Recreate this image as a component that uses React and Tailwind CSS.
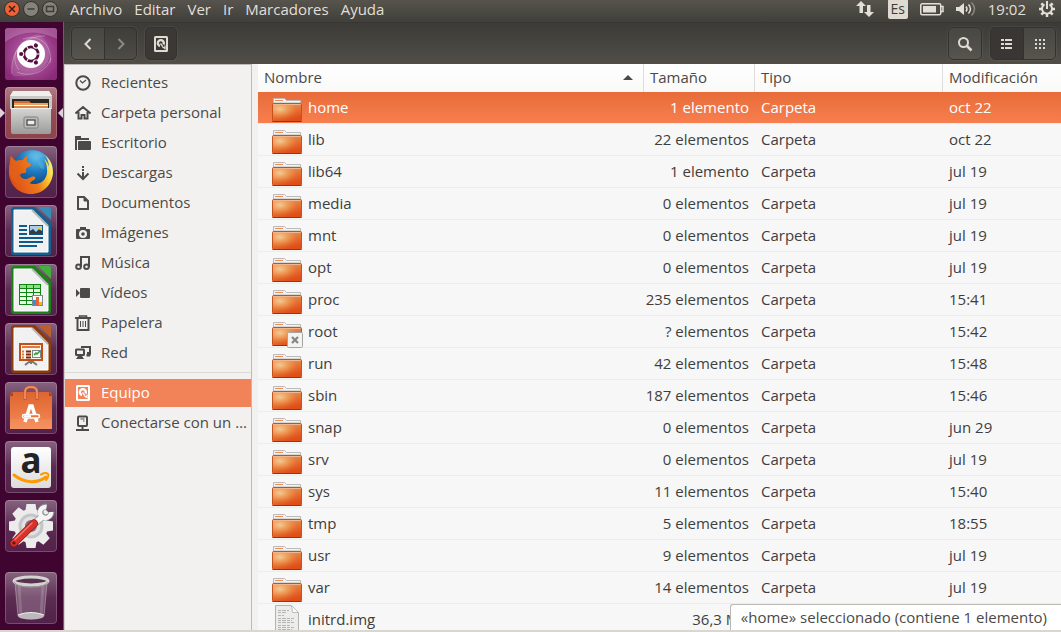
import React from "react";

/* ---------- launcher artwork (each drawn on a 52x52 tile) ---------- */

function DashArt() {
  const ringDots = [180, 60, -60];
  return (
    <svg viewBox="0 0 52 52" className="size-full">
      <defs>
        <radialGradient id="dashGlow" cx="50%" cy="50%" r="60%">
          <stop offset="0" stopColor="#c66fb4" />
          <stop offset="0.6" stopColor="#a04690" />
          <stop offset="1" stopColor="#8b2a78" />
        </radialGradient>
      </defs>
      <rect width="52" height="52" rx="3" fill="url(#dashGlow)" />
      <path d="M8 48C4 26 16 8 34 6c8 6 12 14 10 24C42 42 26 50 8 48z" fill="#fff" opacity="0.12" />
      <path d="M7 46C5 24 18 8 40 8M18 11c18-6 30 8 27 24M46 30c-4 14-20 20-34 14M14 42C6 32 10 18 22 13" fill="none" stroke="#fff" strokeOpacity="0.28" />
      <path d="M0 3a3 3 0 013-3h46a3 3 0 013 3v8C34 2 18 2 0 14z" fill="#fff" opacity="0.2" />
      <circle cx="26" cy="26" r="14" fill="#fff" />
      <circle cx="26" cy="26" r="7.2" fill="none" stroke="#55103f" strokeWidth="2.8" />
      {ringDots.map((a) => (
        <g key={a} transform={`rotate(${a} 26 26)`}>
          <circle cx="35.6" cy="26" r="2.9" fill="#fff" />
          <circle cx="35.8" cy="26" r="2.1" fill="#55103f" />
          <path d="M17 26h3.5" stroke="#fff" strokeWidth="1" />
        </g>
      ))}
    </svg>
  );
}

function FilesArt() {
  return (
    <svg viewBox="0 0 52 52" className="size-full">
      <defs>
        <linearGradient id="drawer" x1="0" x2="0" y1="0" y2="1">
          <stop offset="0" stopColor="#d6d6d4" />
          <stop offset="1" stopColor="#9c9c9a" />
        </linearGradient>
      </defs>
      <path d="M8 4h36l3 5v13H5V9z" fill="#c9c9c7" />
      <path d="M8 4h36l3 5H5z" fill="#efefee" />
      <rect x="7" y="12" width="37" height="10" fill="#2d2522" />
      <path d="M9 14h15l2 2h17v6H9z" fill="#cf6a32" />
      <path d="M9 16h34v2H9z" fill="#e8a062" />
      <path d="M9 18h34v1.2H9z" fill="#fff" />
      <path d="M9 19.2h34V22H9z" fill="#d9873f" />
      <path d="M6 21h40v24q0 2-2 2H8q-2 0-2-2z" fill="url(#drawer)" />
      <path d="M6 21.5h40" stroke="#efefed" />
      <rect x="19" y="30" width="14" height="11" rx="1.5" fill="#bdbdbb" stroke="#7e7e7c" />
      <rect x="22" y="33" width="8" height="5" fill="#eee" stroke="#4d4d4b" strokeWidth="1.3" />
    </svg>
  );
}

function FirefoxArt() {
  return (
    <svg viewBox="0 0 52 52" className="size-full">
      <defs>
        <radialGradient id="globe" cx="60%" cy="15%" r="85%">
          <stop offset="0" stopColor="#63c3ef" />
          <stop offset="0.45" stopColor="#1c78bd" />
          <stop offset="1" stopColor="#072e66" />
        </radialGradient>
        <linearGradient id="foxTail" x1="0" x2="1" y1="0.6" y2="0.3">
          <stop offset="0" stopColor="#dd4a16" />
          <stop offset="0.55" stopColor="#ee7a1b" />
          <stop offset="0.82" stopColor="#fbc935" />
          <stop offset="1" stopColor="#fff07a" />
        </linearGradient>
      </defs>
      <circle cx="27" cy="25" r="21" fill="url(#globe)" />
      <path d="M25 7c6-2 13 0 16 4-4-1-6 1-9 2-4 1-6-2-9-2zM33 16c4-1 7 3 6 7-3 0-6-3-6-7z" fill="#5bb5df" opacity="0.45" />
      <path d="M6 10c1 1 3 4 5 5 2-1 5-1 7-1 1-2 3-4 5-4-1 2-2 4-1 6 2 1 4 1 4 3-1 2-4 2-5 4 0 1 1 3-1 4-2 0-4 0-5 2 1 4 6 5 9 3 2-1 4-2 6-1 1 2-1 3-3 4-4 3-1 3 4 3 8-1 12-8 11-15 0-4-1-7-3-10 3 2 4 5 5 8 0-5-2-9-4-12 6 5 8 11 8 18-1 12-10 21-22 21C13 48 4 38 4 26c0-3 0-5 1-8 0-3 0-5 1-8z" fill="url(#foxTail)" />
      <path d="M6 10c1 1 3 4 5 5 2-1 5-1 7-1-4 3-6 7-4 11-3 3-4 9 2 14C8 36 4 31 4 25c0-6 1-10 2-15z" fill="#e2641c" opacity="0.65" />
    </svg>
  );
}

function OfficePage({ dark, light, children }) {
  return (
    <svg viewBox="0 0 52 52" className="size-full">
      <path d="M8 2h22l16 16v29q0 3-3 3H9q-3 0-3-3V4z" fill={dark} />
      <path d="M33 2h11q2 0 2 2v11z" fill={light} />
      <path d="M9 5h18l16 16v26H9z" fill="#f1f1f1" stroke="#fff" />
      <path d="M27 5l16 16" stroke="#b9b9b9" strokeWidth="2" />
      {children}
    </svg>
  );
}

function WriterArt() {
  return (
    <OfficePage dark="#16608f" light="#378cb8">
      <path d="M14 21h8M14 25h8M14 29h8M14 33h24M14 37h24M14 41h18" stroke="#0f5c8c" strokeWidth="2" />
      <rect x="24" y="20" width="14" height="10" fill="#0d5a89" />
      <rect x="25" y="21" width="12" height="8" fill="#a6d1ee" />
      <path d="M25 29v-3l3-2 3 3 3-3 3 2v3z" fill="#363d40" />
      <circle cx="34.5" cy="23" r="1.5" fill="#f8c83a" />
    </OfficePage>
  );
}

function CalcArt() {
  return (
    <OfficePage dark="#198317" light="#42b13b">
      <rect x="14" y="20" width="22" height="21" fill="#0f8412" />
      {[21, 25, 29, 33, 37].map((y, i) =>
        [15, 22, 29].map((x) => (
          <rect key={`${x}-${y}`} x={x} y={y} width="6" height="3" fill={i === 0 ? "#8ee085" : "#e9fbe6"} />
        ))
      )}
      <rect x="27.5" y="31.5" width="10" height="10" fill="#f5f7f8" stroke="#7c868c" />
      <rect x="28" y="36" width="3" height="5" fill="#2f8fe0" />
      <rect x="31" y="33" width="3" height="8" fill="#e8662d" />
      <rect x="34" y="38" width="3" height="3" fill="#f3b61f" />
    </OfficePage>
  );
}

function ImpressArt() {
  return (
    <OfficePage dark="#8c3b0c" light="#bb602c">
      <rect x="15" y="21" width="22" height="16" fill="#fdf3ec" stroke="#c14f18" strokeWidth="2" />
      <rect x="17" y="23" width="18" height="2" fill="#e07a42" />
      <path d="M17 28.5h2m-2 3h2m-2 3h2" stroke="#e07a42" strokeWidth="2" />
      <path d="M21 28.5h5m-5 3h5m-5 3h5" stroke="#7b2d06" strokeWidth="2" />
      <rect x="27.5" y="27.5" width="8" height="7" fill="#f4f4f4" stroke="#7b8580" />
      <path d="M29 32l2-2 1 1 3-3" fill="none" stroke="#25a02b" strokeWidth="1.5" />
      <path d="M26 38v3m-6 1l4-3h4l4 3" fill="none" stroke="#777" strokeWidth="2" />
    </OfficePage>
  );
}

function StoreArt() {
  return (
    <svg viewBox="0 0 52 52" className="size-full">
      <defs>
        <linearGradient id="bag" x1="0" x2="0" y1="0" y2="1">
          <stop offset="0" stopColor="#dd6530" />
          <stop offset="1" stopColor="#f58a55" />
        </linearGradient>
      </defs>
      <path d="M7 10h38l2 4v33H5V14z" fill="url(#bag)" />
      <path d="M5 14l3-4v4zM47 14l-3-4v4z" fill="#a84318" />
      <path d="M20 18v-8q0-5 6-5t6 5v8" fill="none" stroke="#c8572b" strokeWidth="3" />
      <path d="M20 17v-7q0-5 6-5t6 5v7" fill="none" stroke="#ef9b74" strokeWidth="1.5" />
      <path d="M5 37h42v10H5z" fill="#fff" opacity="0.07" />
      <path d="M20 40l5-16h2l5 16" fill="none" stroke="#fff" strokeWidth="3.5" />
      <rect x="17.5" y="32.5" width="17" height="3.5" rx="1.7" fill="#e87543" stroke="#fff" strokeWidth="1.5" />
      <path d="M19 34.2h7" stroke="#fff" strokeWidth="2" />
    </svg>
  );
}

function AmazonArt() {
  return (
    <svg viewBox="0 0 52 52" className="size-full overflow-visible">
      <defs>
        <linearGradient id="plate" x1="0" x2="0" y1="0" y2="1">
          <stop offset="0" stopColor="#fff" />
          <stop offset="1" stopColor="#dcdcdc" />
        </linearGradient>
      </defs>
      <rect x="6" y="6" width="40" height="41" rx="3" fill="url(#plate)" />
      <text x="26" y="32" textAnchor="middle" fontFamily="Noto Sans" fontWeight="700" fontSize="35" fill="#232323">a</text>
      <path d="M9 34c10 8 23 9 32 2" fill="none" stroke="#f90" strokeWidth="3" strokeLinecap="round" />
      <path d="M36 33.500c3-1.500 6-1.500 7-.5s0 4-2 6" fill="none" stroke="#f90" strokeWidth="2" strokeLinecap="round" />
    </svg>
  );
}

function SettingsArt() {
  const teeth = [0, 45, 90, 135, 180, 225, 270, 315];
  return (
    <svg viewBox="0 0 52 52" className="size-full">
      {teeth.map((a) => (
        <path key={a} d="M21.5 4h9l1.500 9H20z" fill="#ececec" transform={`rotate(${a} 26 26)`} />
      ))}
      <circle cx="26" cy="26" r="17" fill="#ececec" />
      <circle cx="26" cy="26" r="11" fill="#e2e0e1" stroke="#c6c6c6" strokeWidth="3" />
      <circle cx="26" cy="26" r="6" fill="#8a6a82" />
      <path d="M30 23l7-6" stroke="#8c8c8c" strokeWidth="7.5" />
      <path d="M41.500 6.500A5.500 5.500 0 1 0 46.500 12" fill="none" stroke="#8c8c8c" strokeWidth="6" />
      <path d="M41.500 7A5.500 5.500 0 1 0 46 12" fill="none" stroke="#f4f4f4" strokeWidth="4.500" />
      <path d="M30 23l7-6" stroke="#f4f4f4" strokeWidth="6" />
      <path d="M9 43L29 23.500" stroke="#9e1610" strokeWidth="8" strokeLinecap="round" />
      <path d="M9 43L29 23.500" stroke="#d9322a" strokeWidth="6.500" strokeLinecap="round" />
      <path d="M10 39.500L27 23" stroke="#ef7a70" strokeWidth="1.500" strokeLinecap="round" />
      <circle cx="9" cy="43" r="1.600" fill="#5f1310" />
    </svg>
  );
}

function TrashArt() {
  return (
    <svg viewBox="0 0 52 52" className="size-full">
      <path d="M10 11l3 33q13 7 26 0l3-33z" fill="#fff" opacity="0.2" />
      <path d="M14 13l2 31M38 13l-2 31" stroke="#fff" strokeOpacity="0.15" strokeWidth="3" />
      <path d="M10 11l3 33M42 11l-3 33" stroke="#cbbcc8" strokeOpacity="0.5" />
      <ellipse cx="26" cy="44" rx="13" ry="3.500" fill="#bcb8bc" />
      <path d="M13 43q13-5 26 0" fill="none" stroke="#eee" />
      <ellipse cx="26" cy="9" rx="17" ry="4" fill="#583350" stroke="#d5d3d2" strokeWidth="3" />
      <path d="M9 10q3 5 17 5t17-5" fill="none" stroke="#9e9a9b" />
    </svg>
  );
}

const launcherItems = [
  { name: "Buscar en el equipo", Art: DashArt, tile: "bg-[#8b2a78]" },
  { name: "Archivos", Art: FilesArt, tile: "bg-[#8d434e]", active: true },
  { name: "Firefox", Art: FirefoxArt },
  { name: "LibreOffice Writer", Art: WriterArt },
  { name: "LibreOffice Calc", Art: CalcArt },
  { name: "LibreOffice Impress", Art: ImpressArt },
  { name: "Software de Ubuntu", Art: StoreArt },
  { name: "Amazon", Art: AmazonArt },
  { name: "Configuración del sistema", Art: SettingsArt },
];

function LauncherTile({ name, Art, tile = "bg-[#532149]", active }) {
  return (
    <button
      type="button"
      aria-label={name}
      className={`relative size-[52px] shrink-0 rounded-[4px] bg-linear-to-b from-white/30 via-white/5 to-white/0 shadow-[inset_0_0_0_1px_rgba(255,255,255,0.2)] ${tile}`}
    >
      <Art />
      {active && (
        <>
          <span className="absolute top-[21px] -left-[5px] border-y-[5px] border-l-[5px] border-y-transparent border-l-[#dcd4da]" />
          <span className="absolute top-[21px] -right-[6px] border-y-[5px] border-r-[5px] border-y-transparent border-r-[#dcd4da]" />
        </>
      )}
    </button>
  );
}

/* ---------- 16x16 symbolic icons ---------- */

function Sym({ children, size = "size-4" }) {
  return (
    <svg viewBox="0 0 16 16" className={`${size} shrink-0`} fill="none" stroke="currentColor" strokeWidth="2" aria-hidden="true">
      {children}
    </svg>
  );
}

const DiskIcon = () => (
  <Sym>
    <rect x="2" y="1" width="12" height="14" rx="0.5" />
    <path d="M10.500 8.500A3 3 0 10 7 10" strokeWidth="2.400" />
    <path d="M7.500 7.500L9.500 10M9 10.500l3 2V9.500" strokeWidth="1.300" />
  </Sym>
);

const places = [
  { label: "Recientes", icon: <Sym><circle cx="8" cy="8" r="6.700" /><path d="M5 5.500l2.500 2.500L11 5" strokeWidth="1.200" /></Sym> },
  { label: "Carpeta personal", icon: <Sym><path d="M.500 8.500L8 2l7.500 6.500M3.500 7v6.500h3V10h3v3.500h3V7" /></Sym> },
  { label: "Escritorio", icon: <Sym><path d="M0 1h6v2h8v2H2v10H0z" fill="currentColor" stroke="none" /><path d="M4 6h11q1 0 1 1v7q0 1-1 1H3V7q0-1 1-1z" fill="currentColor" stroke="none" /></Sym> },
  { label: "Descargas", icon: <Sym><path d="M8 1v2M8 4v2M8 7v2" /><path d="M8 9v4M2.500 8.500L8 14l5.500-5.500" /></Sym> },
  { label: "Documentos", icon: <Sym><path d="M3 2h6l4 4v8H3z" /><path d="M9 2v4h4z" fill="currentColor" strokeWidth="1" /></Sym> },
  { label: "Imágenes", icon: <Sym><path fillRule="evenodd" d="M5 2h6v2h3q1 0 1 1v8q0 1-1 1H2q-1 0-1-1V5q0-1 1-1h3zM8 5a4 4 0 100 8 4 4 0 000-8zm0 2.200a1.800 1.800 0 110 3.600 1.800 1.800 0 010-3.600z" fill="currentColor" stroke="none" /></Sym> },
  { label: "Música", icon: <Sym><path d="M6 12V2h8v10" /><circle cx="3.500" cy="11.800" r="2.300" /><circle cx="11.500" cy="11.800" r="2.300" /></Sym> },
  { label: "Vídeos", icon: <Sym><path d="M1 4l4 4-4 4zM6 3h8q1 0 1 1v8q0 1-1 1H6q-1 0-1-1V4q0-1 1-1z" fill="currentColor" stroke="none" /></Sym> },
  { label: "Papelera", icon: <Sym><path d="M0 3h16M2.500 4v11h11V4" /><path d="M4.500 3V1h7v2" strokeWidth="1.500" /><path d="M5.500 6v6M8 6v6M10.500 6v6" strokeWidth="1" /></Sym> },
  { label: "Red", icon: <Sym><rect x="1" y="4.500" width="8" height="5.500" rx="0.500" /><path d="M3 11h4l2 3H1zM11.500 9H16l-1 2.500h-3.500z" fill="currentColor" stroke="none" /><path d="M7 3V2h8v6h-3" /></Sym> },
];

const devices = [
  { label: "Equipo", icon: <DiskIcon />, selected: true },
  { label: "Conectarse con un …", icon: <Sym><rect x="3" y="1.500" width="9" height="9.500" rx="1" /><path d="M5.500 4h4M8 6h1.500" strokeWidth="1.200" /><path d="M7.500 11v4M1 15h13" /></Sym> },
];

function PlaceList({ items }) {
  return (
    <ul>
      {items.map(({ label, icon, selected }) => (
        <li key={label} className="py-px">
          <a
            href="#"
            aria-current={selected ? "page" : undefined}
            className={`flex h-7 items-center gap-2.5 pr-1 pl-2.5 whitespace-nowrap ${selected ? "bg-[#f28359] text-white" : "text-[#4b4a48]"}`}
          >
            {icon}
            <span className="pb-0.5">{label}</span>
          </a>
        </li>
      ))}
    </ul>
  );
}

/* ---------- file list ---------- */

const files = [
  ["home", "1 elemento", "oct 22"],
  ["lib", "22 elementos", "oct 22"],
  ["lib64", "1 elemento", "jul 19"],
  ["media", "0 elementos", "jul 19"],
  ["mnt", "0 elementos", "jul 19"],
  ["opt", "0 elementos", "jul 19"],
  ["proc", "235 elementos", "15:41"],
  ["root", "? elementos", "15:42"],
  ["run", "42 elementos", "15:48"],
  ["sbin", "187 elementos", "15:46"],
  ["snap", "0 elementos", "jun 29"],
  ["srv", "0 elementos", "jul 19"],
  ["sys", "11 elementos", "15:40"],
  ["tmp", "5 elementos", "18:55"],
  ["usr", "9 elementos", "jul 19"],
  ["var", "14 elementos", "jul 19"],
  ["initrd.img", "36,3 MB", ""],
];

function FolderIcon({ locked }) {
  return (
    <svg viewBox="0 0 32 28" className="h-7 w-8 shrink-0" aria-hidden="true">
      <defs>
        <linearGradient id="folderBody" x1="0" x2="0.5" y1="0" y2="1">
          <stop offset="0" stopColor="#eca066" />
          <stop offset="0.5" stopColor="#e67d3c" />
          <stop offset="1" stopColor="#e04e18" />
        </linearGradient>
        <radialGradient id="folderShine" cx="25%" cy="30%" r="60%">
          <stop offset="0" stopColor="#f7d29c" stopOpacity="0.9" />
          <stop offset="1" stopColor="#f0a050" stopOpacity="0" />
        </radialGradient>
      </defs>
      <path d="M1.500 7V2.500h11l2 2h14V7z" fill="#f5f4f2" stroke="#bdbab6" />
      <path d="M3 4.500h8" stroke="#ee8a5b" />
      <rect x="0.500" y="7.500" width="29" height="18" rx="1" fill="url(#folderBody)" stroke="#c9501f" />
      <rect x="1" y="8" width="28" height="17" fill="url(#folderShine)" />
      <path d="M1.500 8.500h27" stroke="#f4b68c" />
      <path d="M0.500 25.500h29" stroke="#a52c0c" />
      {locked && (
        <g>
          <rect x="15.500" y="12.500" width="15" height="15" rx="1" fill="#f3f3f2" stroke="#a5a5a3" />
          <path d="M20 17l6 6M26 17l-6 6" stroke="#858583" strokeWidth="2.200" />
        </g>
      )}
    </svg>
  );
}

function DocumentIcon() {
  return (
    <svg viewBox="0 0 32 32" className="h-8 w-8 shrink-0" aria-hidden="true">
      <path d="M3.500 1.500h16l7 7v27h-23z" fill="#ececeb" stroke="#b3b3b1" />
      <path d="M19.500 1.500l1 7h6z" fill="#fff" stroke="#bdbdbb" />
      <path d="M6 6.500h11M6 8.500h9M6 11.500h6M6 14.500h16M6 16.500h14M6 18.500h16M6 21.500h13M6 23.500h16M6 25.500h14M6 28.500h16M6 30.500h16" stroke="#b5b5b3" strokeDasharray="3 1 4 1" />
    </svg>
  );
}

function FileTable() {
  return (
    <table className="w-full table-fixed border-separate border-spacing-0 text-left text-[#3f3e3c]">
      <colgroup>
        <col />
        <col className="w-[111px]" />
        <col className="w-[188px]" />
        <col className="w-[119px]" />
      </colgroup>
      <thead>
        <tr className="h-7 bg-linear-to-b from-white to-[#f9f9f8] text-[#4a4947] [&>th]:pt-0 [&>th]:pr-2.5 [&>th]:pb-0.5 [&>th]:pl-1.5 [&>th]:font-normal">
          <th scope="col" aria-sort="ascending">
            <div className="flex items-center justify-between">
              Nombre
              <span className="border-x-[5px] border-b-[5px] border-x-transparent border-b-[#4a4947]" />
            </div>
          </th>
          <th scope="col" className="border-l border-[#dedddb]">Tamaño</th>
          <th scope="col" className="border-l border-[#dedddb]">Tipo</th>
          <th scope="col" className="border-l border-[#dedddb]">Modificación</th>
        </tr>
      </thead>
      <tbody>
        {files.map(([name, size, date], i) => {
          const isFile = name === "initrd.img";
          const look =
            i === 0
              ? "bg-linear-to-b from-[#e76c39] to-[#f87f4f] text-white"
              : "bg-[#f7f7f7]";
          return (
            <tr key={name} aria-selected={i === 0} className={`h-8 shadow-[inset_0_-1px_0_#ededec] [&>td]:p-0 ${look}`}>
              <td>
                <div className="flex h-8 items-center gap-1 pl-3.5">
                  {isFile ? <DocumentIcon /> : <div className="flex h-8 items-end"><FolderIcon locked={name === "root"} /></div>}
                  <span className="pb-0.5">{name}</span>
                </div>
              </td>
              <td><div className="pr-[5px] pb-0.5 text-right whitespace-nowrap">{size}</div></td>
              <td><div className="pb-0.5 pl-[7px]">{isFile ? "" : "Carpeta"}</div></td>
              <td><div className="pb-0.5 pl-[7px]">{date}</div></td>
            </tr>
          );
        })}
      </tbody>
    </table>
  );
}

/* ---------- top bar and toolbar ---------- */

function TopBar() {
  const round = "flex size-4 items-center justify-center rounded-full border border-[#33312c]";
  return (
    <header className="flex h-[22px] shrink-0 items-center bg-linear-to-b from-[#56544c] to-[#403f3a] pb-1 text-[#e3dfd7]">
      <div className="flex gap-[3px] pl-1">
        <button type="button" aria-label="Cerrar" className={`${round} bg-[#ee6238] text-[#3b1f14]`}>
          <svg viewBox="0 0 16 16" className="size-4 shrink-0" stroke="currentColor" strokeWidth="1.5"><path d="M5 5l6 6m0-6l-6 6" /></svg>
        </button>
        <button type="button" aria-label="Minimizar" className={`${round} bg-[#84827a] text-[#3c3b37]`}>
          <svg viewBox="0 0 16 16" className="size-4 shrink-0" stroke="currentColor" strokeWidth="1.500"><path d="M4.500 8h7" /></svg>
        </button>
        <button type="button" aria-label="Restaurar" className={`${round} bg-[#84827a] text-[#3c3b37]`}>
          <svg viewBox="0 0 16 16" className="size-4 shrink-0" fill="none" stroke="currentColor" strokeWidth="1.500"><rect x="4.500" y="5.500" width="7" height="5" /></svg>
        </button>
      </div>
      <nav className="flex gap-3 pl-3">
        {["Archivo", "Editar", "Ver", "Ir", "Marcadores", "Ayuda"].map((m) => (
          <button key={m} type="button">{m}</button>
        ))}
      </nav>
      <div className="ml-auto flex items-center pr-[5px]">
        <svg viewBox="0 0 18 18" className="mr-3.5 size-[18px]" fill="currentColor" role="img" aria-label="Red">
          <path d="M0 6l5-5 5 5H7v7H3.500V6zM8 12h3V5h3.500v7H18l-5 5z" />
        </svg>
        <span className="mr-3 flex h-5 w-5 items-center justify-center rounded-[2px] bg-[#dfdbd2] text-sm text-[#3c3b37]">Es</span>
        <svg viewBox="0 0 24 14" className="mr-3 h-3.5 w-6" fill="none" stroke="currentColor" role="img" aria-label="Batería">
          <rect x="0.750" y="1.750" width="20" height="11" rx="1.500" strokeWidth="1.500" />
          <rect x="3" y="4" width="13" height="6.500" fill="currentColor" stroke="none" />
          <path d="M21 4.500h2v5h-2" strokeWidth="1.500" />
        </svg>
        <svg viewBox="0 0 20 16" className="mr-3 h-4 w-5" fill="none" stroke="currentColor" strokeWidth="1.500" role="img" aria-label="Sonido">
          <path d="M0 6h3l5-4v12l-5-4H0z" fill="currentColor" stroke="none" />
          <path d="M10 5.500q2 2.500 0 5M12.500 3.500q4 4.500 0 9" />
          <path d="M15.500 1.500q6 6.500 0 13" opacity="0.4" />
        </svg>
        <time className="mr-3">19:02</time>
        <svg viewBox="0 0 18 18" className="size-[18px]" fill="none" stroke="currentColor" role="img" aria-label="Sistema">
          <path d="M6.500 4.400a5 5 0 105 0" strokeWidth="2" />
          <path d="M9 1v8" strokeWidth="2" />
          <path d="M14 9h3M1 9h3M9 14v3M12.500 12.500l2.200 2.200M5.500 12.500l-2.200 2.200M13 5l1.700-1.700M5 5L3.300 3.300" strokeWidth="2.500" />
        </svg>
      </div>
    </header>
  );
}

function Toolbar() {
  const group = "flex h-[33px] overflow-hidden rounded-[5px] border border-[#33322e] shadow-[0_0_0_1px_rgba(255,255,255,0.05)]";
  const btn = "flex w-8 items-center justify-center";
  return (
    <div className="flex h-[42px] shrink-0 items-center border-t border-[#383733] bg-linear-to-b from-[#3c3b37] to-[#504e47] pr-[5px] pl-[7px] text-[#dfdbd2]">
      <div className={group}>
        <button type="button" aria-label="Atrás" className={`${btn} bg-white/5`}>
          <Sym><path d="M10.500 3L5.500 8l5 5" /></Sym>
        </button>
        <button type="button" aria-label="Adelante" className={`${btn} border-l border-[#33322e] text-[#8d8a83]`}>
          <Sym><path d="M5.500 3l5 5-5 5" /></Sym>
        </button>
      </div>
      <div className={`${group} ml-2 bg-[#3a3935]`}>
        <button type="button" aria-label="Equipo" className="flex w-[30px] items-center justify-center"><DiskIcon /></button>
      </div>
      <div className={`${group} ml-auto bg-white/5`}>
        <button type="button" aria-label="Buscar" className={btn}>
          <Sym><circle cx="6.500" cy="6.500" r="4.500" /><path d="M9.500 9.500l5 5" strokeWidth="2.600" /></Sym>
        </button>
      </div>
      <div className={`${group} ml-2`}>
        <button type="button" aria-label="Vista de lista" className={`${btn} bg-[#383733]`}>
          <Sym><path d="M2 4h3M6 4h7M2 8h3M6 8h7M2 12h3M6 12h7" /></Sym>
        </button>
        <button type="button" aria-label="Vista de iconos" className={`${btn} border-l border-[#33322e] bg-white/5`}>
          <Sym><path d="M3 4h10M3 8h10M3 12h10" strokeDasharray="2 2" /></Sym>
        </button>
      </div>
    </div>
  );
}

export default function App() {
  return (
    <div className="flex h-screen flex-col overflow-hidden border-b-2 border-[#dad6d0] bg-[#f2f1f0] font-['Open_Sans','Noto_Sans',sans-serif] text-[15px] leading-5">
      <TopBar />
      <div className="flex min-h-0 flex-1">
        <aside className="flex w-16 shrink-0 flex-col gap-[7px] border-r border-[#7d5375] bg-[#400430] pt-1.5 pb-1.5 pl-[5px]">
          {launcherItems.map((item) => (
            <LauncherTile key={item.name} {...item} />
          ))}
          <div className="mt-auto flex">
            <LauncherTile name="Papelera" Art={TrashArt} />
          </div>
        </aside>
        <div className="flex min-w-0 flex-1 flex-col">
          <Toolbar />
          <div className="flex min-h-0 flex-1">
            <nav className="w-[188px] shrink-0 border-t border-r border-l border-[#bebbb7] border-l-[#d5d2ce] pt-[3px]">
              <PlaceList items={places} />
              <hr className="mt-1 mb-[5px] border-[#dcdad7]" />
              <PlaceList items={devices} />
            </nav>
            <main className="relative ml-1.5 min-w-0 flex-1 overflow-hidden bg-[#f7f7f7]">
              <FileTable />
              <div role="status" className="absolute right-0 bottom-0 flex h-[26px] items-center rounded-tl-[3px] border-t border-l border-[#bcb9b5] bg-white pr-3.5 pb-0.5 pl-2.5 text-[#4a4947]">
                «home» seleccionado (contiene 1 elemento)
              </div>
            </main>
          </div>
        </div>
      </div>
    </div>
  );
}
